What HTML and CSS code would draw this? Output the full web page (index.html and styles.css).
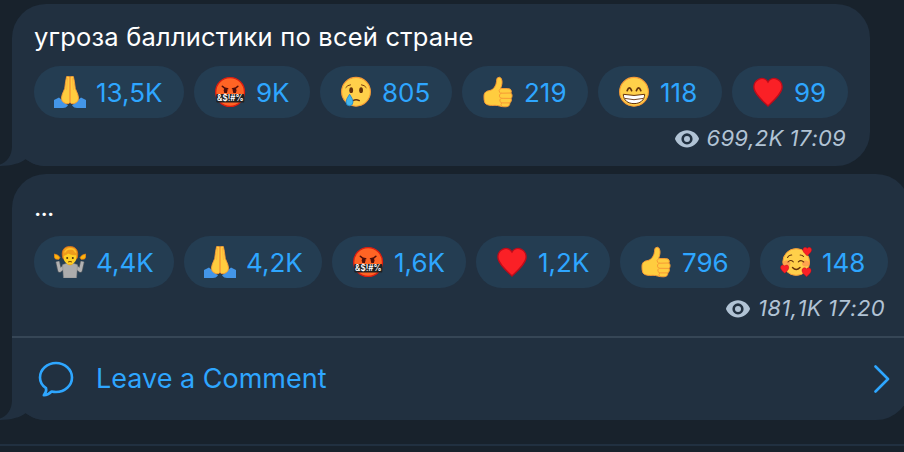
FILE: index.html
```html
<!DOCTYPE html>
<html lang="ru">
<head>
    <meta charset="UTF-8">
    <meta name="viewport" content="width=device-width, initial-scale=1.0">
    <title>Channel</title>
    <link rel="stylesheet" href="styles.css">
</head>
<body>
    <!-- Shared shapes -->
    <svg class="sprite" xmlns="http://www.w3.org/2000/svg">
        <symbol id="tail" viewBox="0 0 46 36">
            <path d="M12 0V16C12 26 7 32 0 34.6V36C11 35.8 20 33.5 26 29C32 34 39 36 46 36V0Z"/>
        </symbol>
        <symbol id="eye" viewBox="0 0 24 18">
            <path fill-rule="evenodd" d="M12 .3C6.4 .3 2 4 .2 8.1a1.8 1.8 0 0 0 0 1.5C2 13.8 6.4 17.5 12 17.5s10-3.7 11.8-7.9a1.8 1.8 0 0 0 0-1.5C22 4 17.6 .3 12 .3ZM12 3.3a5.6 5.6 0 1 1 0 11.2a5.6 5.6 0 1 1 0-11.2Z"/>
            <circle cx="12" cy="8.9" r="3"/>
        </symbol>
        <symbol id="pray" viewBox="0 0 32 32">
            <path fill="#4396e8" d="M0 24L5 21.5L14 29.5Q12 32 9 32H0ZM32 24L27 21.5L18 29.5Q20 32 23 32H32Z"/>
            <path fill="#ffcd3f" stroke="#f79a35" stroke-width=".9" d="M12.6 .6Q14.5 -.2 16 1Q17.5 -.2 19.4 .6Q20.5 5 21.3 12.5Q24.7 19.5 24.6 22.5C24.4 26 20.5 28 18.3 27.8Q16.5 27.6 16 26Q15.5 27.6 13.7 27.8C11.5 28 7.6 26 7.4 22.5Q7.3 19.5 10.7 12.5Q11.5 5 12.6 .6Z"/>
            <path fill="none" stroke="#f58b32" stroke-width="1.2" d="M16 1V26"/>
            <path fill="none" stroke="#ffad3a" stroke-width=".8" d="M13.6 2L12.6 14M18.4 2L19.4 14"/>
        </symbol>
        <symbol id="rage" viewBox="0 0 32 32">
            <circle cx="16.1" cy="16" r="14.4" fill="#ff6424" stroke="#dd1d10" stroke-width="1.3"/>
            <path fill="none" stroke="#4e0e0a" stroke-width="1.5" stroke-linecap="round" d="M8.3 10.2Q10.5 12.8 13.7 12.8M23.9 10.2Q21.7 12.8 18.5 12.8"/>
            <ellipse cx="11.6" cy="14.4" rx="1.9" ry="2.7" fill="#4e0e0a"/>
            <ellipse cx="20.6" cy="14.4" rx="1.9" ry="2.7" fill="#4e0e0a"/>
            <rect x="2.3" y="18" width="28" height="8.4" rx="1" fill="#202020"/>
            <text class="swear" x="16.3" y="25.3" text-anchor="middle" textLength="26.5" lengthAdjust="spacingAndGlyphs">&amp;$!#%</text>
        </symbol>
        <symbol id="cry" viewBox="0 0 32 32">
            <circle cx="16" cy="15.8" r="14.4" fill="#ffd04a" stroke="#f79a35" stroke-width="1.1"/>
            <ellipse cx="11.2" cy="14.2" rx="1.9" ry="2.9" fill="#65320b"/>
            <ellipse cx="21.1" cy="14.2" rx="1.9" ry="2.9" fill="#65320b"/>
            <path fill="none" stroke="#7b3c0d" stroke-width="1" stroke-linecap="round" d="M5.8 11.5Q7.5 9 10.5 8.8M21.5 8.8Q24.5 9 26.2 11.5"/>
            <path fill="none" stroke="#65320b" stroke-width="1.4" stroke-linecap="round" d="M13 24.6Q16 22.8 19.3 24.6"/>
            <path fill="#40b5ed" stroke="#2484c8" stroke-width=".8" d="M9.6 18.2Q13 23 13 26Q13 29.6 9.5 29.8Q6 29.6 6 26Q6.2 23 9.6 18.2Z"/>
        </symbol>
        <symbol id="like" viewBox="0 0 32 32">
            <path fill="#ffcd3f" stroke="#f79a35" stroke-width="1" stroke-linejoin="round" d="M2 20C2 16.5 4.5 14.8 8 14.5C11.5 13.5 14 10 14.5 5.5L15 2.3Q17.5 0 19.3 2.5C20.8 6 19.8 9.5 18.5 12.6H25.5Q29 12.5 29.3 15Q29.3 16.5 28.8 17Q30.5 18.5 30 20.5Q29.8 21.8 29 22.4Q29.8 24 29 25.5Q28.5 26.6 27.8 26.9Q28 30.8 23.5 30.8C19 31 16.5 29.2 13 29.3Q5 30 3 27Q1.7 24 2 20Z"/>
            <path fill="none" stroke="#f79a35" stroke-width="1" stroke-linecap="round" d="M18.5 12.6Q16 14.5 17.7 16.5Q18.5 17.4 20 17.2L28.8 17M19 17.3Q16.5 18.5 17.6 20.8Q18.5 22.5 20 22.3L29 22.4M19 22.5Q17 23.7 18 25.6Q19 27 20.5 26.9H27.8M19.6 27Q18.2 28.2 19.4 30"/>
        </symbol>
        <symbol id="grin" viewBox="0 0 32 32">
            <circle cx="16" cy="15.8" r="14.4" fill="#ffd04a" stroke="#f79a35" stroke-width="1.1"/>
            <path fill="none" stroke="#65320b" stroke-width="1.7" stroke-linecap="round" d="M9.2 14.6Q11.4 9 13.6 14.6M18.4 14.6Q20.6 9 22.8 14.6"/>
            <path fill="#fff" stroke="#65320b" stroke-width="1" stroke-linejoin="round" d="M5.3 18.3Q16 20.6 26.7 18.3C26.5 24.5 22 27.6 16 27.6S5.5 24.5 5.3 18.3Z"/>
            <path fill="none" stroke="#65320b" stroke-width=".9" d="M6.8 22.4Q16 25 25.2 22.4"/>
        </symbol>
        <symbol id="heart" viewBox="0 0 32 32">
            <path fill="#fa2026" stroke="#be0c1a" stroke-width="1.4" d="M16 6C13.7 2.4 9.8 1.8 6.6 3.3C3 5 1.3 9 2.2 13C3.5 19 11.5 25.6 16 30C20.5 25.6 28.5 19 29.8 13C30.7 9 29 5 25.4 3.3C22.2 1.8 18.3 2.4 16 6Z"/>
        </symbol>
        <symbol id="shrug" viewBox="0 0 32 32">
            <path fill="none" stroke="#565d64" stroke-width="4.4" stroke-linejoin="round" d="M3.6 15.5L5.6 24.5L11.5 19.5M28.4 15.5L26.4 24.5L20.5 19.5"/>
            <path fill="none" stroke="#b2b2b2" stroke-width="3" stroke-linejoin="round" d="M3.6 15.5L5.6 24.5L12 19.5M28.4 15.5L26.4 24.5L20 19.5"/>
            <path fill="#acacac" stroke="#858585" stroke-width=".5" d="M8.5 18.8Q16 15 23.5 18.8L22.5 32H9.5Z"/>
            <path fill="#ffb50c" stroke="#e98517" stroke-width=".8" d="M.4 8L4 9.3L5.9 11.5L4.8 13.3L1.5 13L.4 11ZM31.6 8L28 9.3L26.1 11.5L27.2 13.3L30.5 13L31.6 11Z"/>
            <path fill="#eda515" d="M13 15h6v3q-3 2.5-6 0Z"/>
            <path fill="#f09c1c" stroke="#d9711b" stroke-width=".9" d="M9 12.5C6.8 5.5 9.5 .6 15.5 .5C22.3 .3 25.2 5.5 23 12.5Q20 16 16 15.5Q12 16 9 12.5Z"/>
            <path fill="#ffcf24" d="M9.8 10Q12.5 9 14 7.5Q17.5 9.6 22.2 9.2V12.5C22 16 19 18.3 16 18.3S10 16 9.8 12.5Z"/>
            <path fill="none" stroke="#ffc02a" stroke-width="1.5" stroke-linecap="round" d="M11 6Q12.500 2.800 16.500 2.700Q20.500 3 21.500 6"/>
            <circle cx="13.2" cy="12" r="1" fill="#4e3010"/>
            <circle cx="18.8" cy="12" r="1" fill="#4e3010"/>
            <path fill="none" stroke="#65320b" stroke-width=".9" stroke-linecap="round" d="M14.4 15.8Q16 15 17.6 15.8"/>
        </symbol>
        <symbol id="love" viewBox="0 0 32 32">
            <circle cx="16.2" cy="16" r="13.4" fill="#ffd04a" stroke="#f79a35" stroke-width="1"/>
            <ellipse cx="6.7" cy="17.5" rx="3.7" ry="3" fill="#ff9650" opacity=".75"/>
            <ellipse cx="25.7" cy="17.5" rx="3.7" ry="3" fill="#ff9650" opacity=".75"/>
            <path fill="none" stroke="#65320b" stroke-width="1.1" stroke-linecap="round" d="M8 16Q10.5 13.2 13.3 15.8M18.3 15.8Q21 13.2 23.7 16M7.5 11.5Q9 8.8 11.7 9M20.2 9Q22.5 9 23.5 10.5"/>
            <path fill="none" stroke="#65320b" stroke-width="1.4" stroke-linecap="round" d="M12.5 21.5Q16.2 25.5 20 21.5"/>
            <use href="#heart" x="0" y="18.3" width="9.5" height="9.5"/>
            <use href="#heart" x="22.2" y=".5" width="10" height="10"/>
            <use href="#heart" x="21.3" y="21" width="10.5" height="10.5"/>
        </symbol>
    </svg>

    <main class="chat">
        <article class="message message-short">
            <svg class="tail"><use href="#tail"/></svg>
            <p class="message-text">угроза баллистики по всей стране</p>
            <div class="reactions reactions-first">
                <button class="reaction"><svg class="emoji"><use href="#pray"/></svg><span>13,5K</span></button>
                <button class="reaction"><svg class="emoji"><use href="#rage"/></svg><span>9K</span></button>
                <button class="reaction"><svg class="emoji"><use href="#cry"/></svg><span>805</span></button>
                <button class="reaction"><svg class="emoji"><use href="#like"/></svg><span>219</span></button>
                <button class="reaction"><svg class="emoji"><use href="#grin"/></svg><span>118</span></button>
                <button class="reaction"><svg class="emoji"><use href="#heart"/></svg><span>99</span></button>
            </div>
            <div class="meta">
                <svg class="eye"><use href="#eye"/></svg>
                <span class="views">699,2K</span>
                <time>17:09</time>
            </div>
        </article>

        <article class="message message-wide">
            <svg class="tail"><use href="#tail"/></svg>
            <p class="message-text dots">...</p>
            <div class="reactions reactions-second">
                <button class="reaction"><svg class="emoji"><use href="#shrug"/></svg><span>4,4K</span></button>
                <button class="reaction"><svg class="emoji"><use href="#pray"/></svg><span>4,2K</span></button>
                <button class="reaction"><svg class="emoji"><use href="#rage"/></svg><span>1,6K</span></button>
                <button class="reaction"><svg class="emoji"><use href="#heart"/></svg><span>1,2K</span></button>
                <button class="reaction"><svg class="emoji"><use href="#like"/></svg><span>796</span></button>
                <button class="reaction"><svg class="emoji"><use href="#love"/></svg><span>148</span></button>
            </div>
            <div class="meta meta-wide">
                <svg class="eye"><use href="#eye"/></svg>
                <span class="views">181,1K</span>
                <time>17:20</time>
            </div>
            <a class="comment" href="#">
                <svg class="comment-icon" viewBox="0 0 36 36">
                    <path d="M8 27.2C4.300 24.700 2 20.900 2 16.500C2 8.500 9.200 2 18 2S34 8.500 34 16.500S26.800 31 18 31C16.500 31 15 30.800 13.600 30.500C11.500 32.600 8.800 34.300 5.800 34.200C7.800 32.200 8.700 29.800 8 27.200Z"/>
                </svg>
                <span>Leave a Comment</span>
                <svg class="chevron" viewBox="0 0 16 28">
                    <path d="M1.5 1.5L14 14L1.5 26.5"/>
                </svg>
            </a>
        </article>
    </main>
    <footer class="bottom-bar"></footer>
</body>
</html>
```

FILE: styles.css
```css
* {
    margin: 0;
    padding: 0;
    box-sizing: border-box;
}

body {
    height: 452px;
    overflow: hidden;
    background-color: #18222c;
    color: #fff;
    font-family: Inter, 'Liberation Sans', sans-serif;
}

.sprite {
    display: none;
}

.chat {
    display: flex;
    flex-direction: column;
    gap: 8px;
    height: 444px;
    padding: 4px 0 0 12px;
}

.message {
    position: relative;
    flex: none;
    background-color: #213040;
    border-radius: 34px;
    padding: 16px 22px 0;
}

.message-short {
    width: 858px;
    height: 162px;
}

.message-wide {
    width: 898px;
    height: 246px;
}

.tail {
    position: absolute;
    left: -12px;
    bottom: 0;
    width: 46px;
    height: 36px;
    fill: #213040;
}

.message-text {
    height: 46px;
    font-size: 25.5px;
    line-height: 34px;
    letter-spacing: 0.2px;
    white-space: nowrap;
}

.dots {
    letter-spacing: -0.9px;
}

/* Reaction pills */
.reactions {
    display: grid;
    grid-auto-rows: 52px;
    gap: 10px;
}

.reactions-first {
    grid-template-columns: 150px 116px 132px 126px 124px 116px;
}

.reactions-second {
    grid-template-columns: 140px 138px 134px 134px 130px 128px;
}

.reaction {
    display: flex;
    align-items: center;
    gap: 10px;
    padding-left: 20px;
    border: none;
    border-radius: 26px;
    background-color: #243d52;
    color: #2ea6ff;
    font-family: inherit;
    font-size: 26px;
    line-height: 32px;
    white-space: nowrap;
    cursor: pointer;
}

.reaction span {
    padding-top: 2px;
}

.emoji {
    flex: none;
    width: 32px;
    height: 32px;
}

.swear {
    fill: #fff;
    font-family: Inter, sans-serif;
    font-size: 8.5px;
    font-weight: 600;
}

/* Views and time */
.meta {
    display: flex;
    align-items: center;
    justify-content: flex-end;
    height: 42px;
    padding-right: 2px;
    color: #b1c3d5;
    font-size: 22px;
    font-style: italic;
    font-kerning: none;
    letter-spacing: 0.25px;
}

.meta-wide {
    padding-right: 3px;
    letter-spacing: 0.4px;
}

.meta span,
.meta time {
    padding-bottom: 2px;
}

.eye {
    width: 24px;
    height: 18px;
    margin-right: 8px;
    fill: #b1c3d5;
}

.views {
    margin-right: 6px;
}

/* Comment row */
.comment {
    display: flex;
    align-items: center;
    height: 84px;
    margin: 6px -22px 0;
    padding: 0 20px 0 26px;
    border-top: 2px solid #364656;
    color: #2ea6ff;
    font-size: 27px;
    text-decoration: none;
}

.comment span {
    padding-bottom: 2px;
}

.comment-icon,
.chevron {
    position: relative;
    flex: none;
    fill: none;
    stroke: #2ea6ff;
    stroke-width: 2.6;
    stroke-linecap: round;
    stroke-linejoin: round;
}

.comment-icon {
    width: 36px;
    height: 36px;
    margin-right: 22px;
}

.chevron {
    width: 16px;
    height: 28px;
    margin-left: auto;
}

.bottom-bar {
    height: 8px;
    border-top: 2px solid #213040;
}
```
